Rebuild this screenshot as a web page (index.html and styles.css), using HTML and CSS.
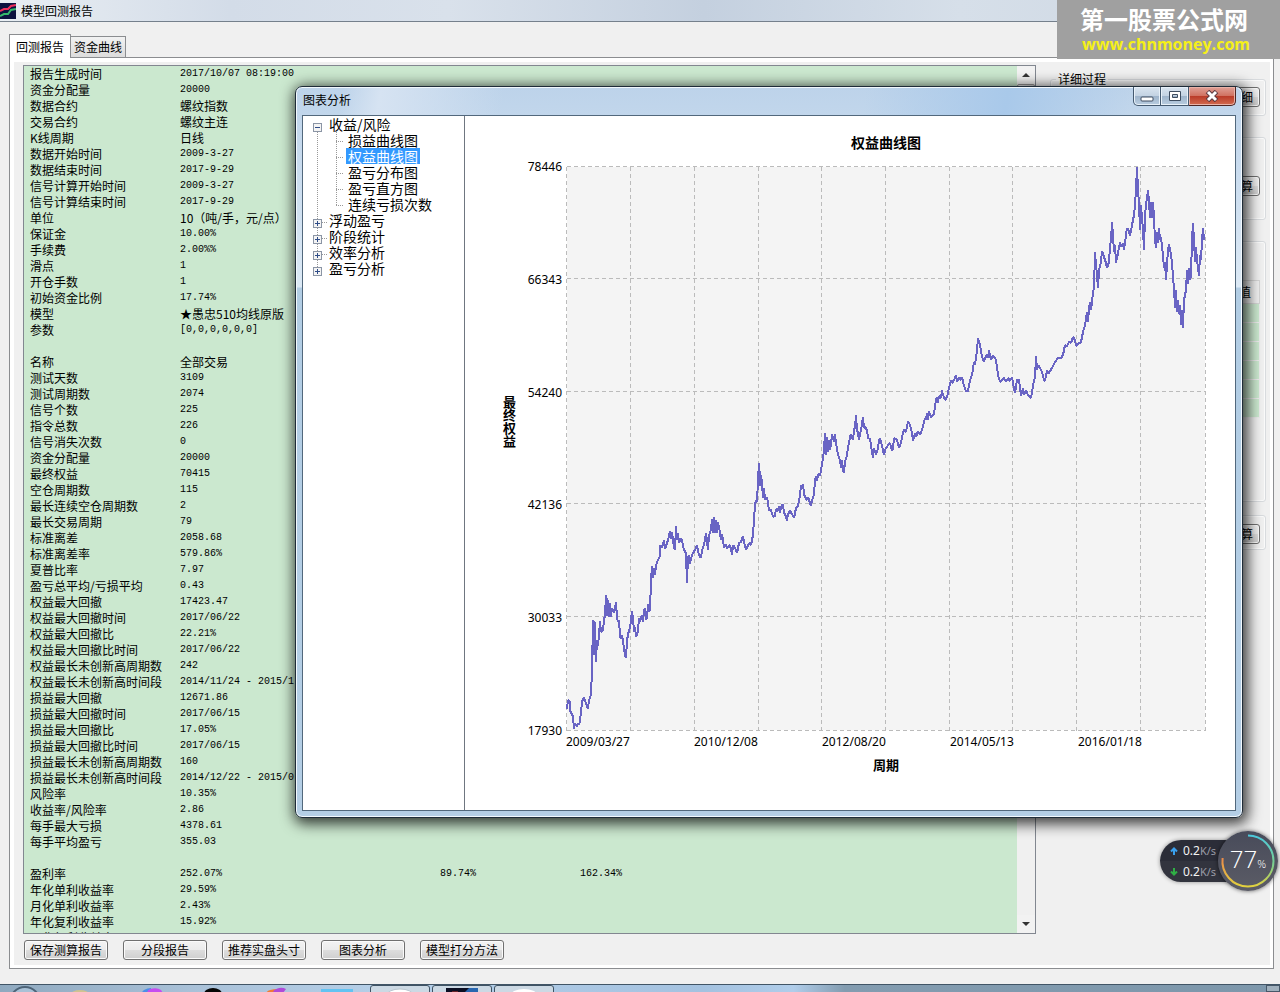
FILE: index.html
```html
<!DOCTYPE html>
<html lang="zh-CN">
<head>
<meta charset="utf-8">
<title>模型回测报告</title>
<link rel="stylesheet" href="styles.css">
</head>
<body>
<div class="desktop">
  <header class="titlebar">
    <svg class="app-icon" viewBox="0 0 16 16" aria-hidden="true"><rect width="16" height="16" fill="#0c1240"/><path d="M0 8 4 6 8 6 11 3 16 2" fill="none" stroke="#f0305c" stroke-width="2"/><path d="M0 13 4 11 8 11 11 7 16 6" fill="none" stroke="#35b96c" stroke-width="2"/></svg>
    <h1 class="window-name">模型回测报告</h1>
  </header>

  <main class="window-body">
    <nav class="tabs">
      <button class="tab tab-active" type="button">回测报告</button>
      <button class="tab" type="button">资金曲线</button>
    </nav>
    <div class="panel">
      <div class="panel-inner">
        <section class="left">
          <div class="report">
            <div class="report-text">
              <table class="rows">
                <colgroup><col class="c1"><col class="c2"><col class="c3"><col></colgroup>
                <tbody>
                <tr><th>报告生成时间</th><td>2017/10/07 08:19:00</td></tr>
                <tr><th>资金分配量</th><td>20000</td></tr>
                <tr><th>数据合约</th><td class="zh">螺纹指数</td></tr>
                <tr><th>交易合约</th><td class="zh">螺纹主连</td></tr>
                <tr><th>K线周期</th><td class="zh">日线</td></tr>
                <tr><th>数据开始时间</th><td>2009-3-27</td></tr>
                <tr><th>数据结束时间</th><td>2017-9-29</td></tr>
                <tr><th>信号计算开始时间</th><td>2009-3-27</td></tr>
                <tr><th>信号计算结束时间</th><td>2017-9-29</td></tr>
                <tr><th>单位</th><td class="zh">10（吨/手，元/点）</td></tr>
                <tr><th>保证金</th><td>10.00%</td></tr>
                <tr><th>手续费</th><td>2.00%%</td></tr>
                <tr><th>滑点</th><td>1</td></tr>
                <tr><th>开仓手数</th><td>1</td></tr>
                <tr><th>初始资金比例</th><td>17.74%</td></tr>
                <tr><th>模型</th><td class="zh">★愚忠510均线原版</td></tr>
                <tr><th>参数</th><td>[0,0,0,0,0,0]</td></tr>
                <tr><th></th><td></td></tr>
                <tr><th>名称</th><td class="zh">全部交易</td></tr>
                <tr><th>测试天数</th><td>3109</td></tr>
                <tr><th>测试周期数</th><td>2074</td></tr>
                <tr><th>信号个数</th><td>225</td></tr>
                <tr><th>指令总数</th><td>226</td></tr>
                <tr><th>信号消失次数</th><td>0</td></tr>
                <tr><th>资金分配量</th><td>20000</td></tr>
                <tr><th>最终权益</th><td>70415</td></tr>
                <tr><th>空仓周期数</th><td>115</td></tr>
                <tr><th>最长连续空仓周期数</th><td>2</td></tr>
                <tr><th>最长交易周期</th><td>79</td></tr>
                <tr><th>标准离差</th><td>2058.68</td></tr>
                <tr><th>标准离差率</th><td>579.86%</td></tr>
                <tr><th>夏普比率</th><td>7.97</td></tr>
                <tr><th>盈亏总平均/亏损平均</th><td>0.43</td></tr>
                <tr><th>权益最大回撤</th><td>17423.47</td></tr>
                <tr><th>权益最大回撤时间</th><td>2017/06/22</td></tr>
                <tr><th>权益最大回撤比</th><td>22.21%</td></tr>
                <tr><th>权益最大回撤比时间</th><td>2017/06/22</td></tr>
                <tr><th>权益最长未创新高周期数</th><td>242</td></tr>
                <tr><th>权益最长未创新高时间段</th><td>2014/11/24 - 2015/1</td></tr>
                <tr><th>损益最大回撤</th><td>12671.86</td></tr>
                <tr><th>损益最大回撤时间</th><td>2017/06/15</td></tr>
                <tr><th>损益最大回撤比</th><td>17.05%</td></tr>
                <tr><th>损益最大回撤比时间</th><td>2017/06/15</td></tr>
                <tr><th>损益最长未创新高周期数</th><td>160</td></tr>
                <tr><th>损益最长未创新高时间段</th><td>2014/12/22 - 2015/0</td></tr>
                <tr><th>风险率</th><td>10.35%</td></tr>
                <tr><th>收益率/风险率</th><td>2.86</td></tr>
                <tr><th>每手最大亏损</th><td>4378.61</td></tr>
                <tr><th>每手平均盈亏</th><td>355.03</td></tr>
                <tr><th></th><td></td></tr>
                <tr><th>盈利率</th><td>252.07%</td><td>89.74%</td><td>162.34%</td></tr>
                <tr><th>年化单利收益率</th><td>29.59%</td></tr>
                <tr><th>月化单利收益率</th><td>2.43%</td></tr>
                <tr><th>年化复利收益率</th><td>15.92%</td></tr>
                <tr><th>月化复利收益率</th><td></td></tr>
                </tbody>
              </table>
            </div>
            <div class="scrollbar">
              <button class="scroll-btn" type="button" aria-label="向上"><svg width="8" height="4" viewBox="0 0 8 4"><path d="M0 4 4 0 8 4z" fill="#333"/></svg></button>
              <div class="thumb"></div>
              <button class="scroll-btn" type="button" aria-label="向下"><svg width="8" height="4" viewBox="0 0 8 4"><path d="M0 0 4 4 8 0z" fill="#333"/></svg></button>
            </div>
          </div>
          <div class="actions">
            <button class="btn" type="button">保存测算报告</button>
            <button class="btn" type="button">分段报告</button>
            <button class="btn" type="button">推荐实盘头寸</button>
            <button class="btn" type="button">图表分析</button>
            <button class="btn" type="button">模型打分方法</button>
          </div>
        </section>
        <aside class="side">
          <fieldset class="group g-detail">
            <legend>详细过程</legend>
            <button class="btn btn-end" type="button">细</button>
          </fieldset>
          <div class="group g-calc"><button class="btn btn-end" type="button">算</button></div>
          <div class="group g-values">
            <table class="values">
              <thead><tr><th>值</th></tr></thead>
              <tbody><tr><td></td></tr><tr><td></td></tr><tr><td></td></tr><tr><td></td></tr><tr><td></td></tr><tr><td></td></tr></tbody>
            </table>
          </div>
          <div class="group g-last"><button class="btn btn-end" type="button">算</button></div>
        </aside>
      </div>
    </div>
  </main>

  <footer class="taskbar">
    <svg class="tray" width="360" height="8" viewBox="0 0 360 8" aria-hidden="true">
      <circle cx="25" cy="17" r="15" fill="#a9c1d6" stroke="#4d6478" stroke-width="2"/>
      <ellipse cx="80" cy="9" rx="9" ry="4" fill="#cfc391"/>
      <path d="M142 8a10 5 0 0 1 9-5v5z" fill="#4b8fe8"/><path d="M147 8a8 5 0 0 1 14-3l2 3z" fill="#c64df0"/>
      <ellipse cx="213" cy="9" rx="9" ry="6" fill="#050505"/>
      <path d="M266 8a12 5 0 0 1 12-4v4z" fill="#f07a35"/><path d="M273 8a8 5 0 0 1 13-4l-3 4z" fill="#b04ad8"/>
      <rect x="321" y="4" width="32" height="4" fill="#63c3f2"/>
    </svg>
    <button class="task" type="button" aria-label="浏览器"><svg width="30" height="6" viewBox="0 0 30 6"><ellipse cx="15" cy="7" rx="13" ry="6" fill="#fff" stroke="#b9c6d0"/></svg></button>
    <button class="task" type="button" aria-label="行情软件"><svg width="32" height="6" viewBox="0 0 32 6"><rect width="32" height="6" fill="#0b0e22"/><path d="M6 4h6" stroke="#c53b32"/><path d="M17 6 23 0h9v4z" fill="#2866b0"/></svg></button>
    <button class="task" type="button" aria-label="程序"><svg width="30" height="6" viewBox="0 0 30 6"><ellipse cx="15" cy="7" rx="13" ry="6" fill="#fff"/></svg></button>
    <span class="show-desktop"></span>
  </footer>

  <section class="dialog" role="dialog" aria-labelledby="dlg">
    <header class="dialog-title">
      <h2 id="dlg">图表分析</h2>
      <div class="controls">
        <button class="ctl ctl-min" type="button" aria-label="最小化"><svg width="14" height="12" viewBox="0 0 14 12"><rect x="1" y="7" width="12" height="4" rx="1" fill="#fff" stroke="#3e4d60"/></svg></button>
        <button class="ctl ctl-max" type="button" aria-label="最大化"><svg width="14" height="12" viewBox="0 0 14 12"><path fill-rule="evenodd" d="M1.500 1.500h11v9h-11zM4.500 4.500v3h5v-3z" fill="#fff" stroke="#3e4d60"/></svg></button>
        <button class="ctl ctl-close" type="button" aria-label="关闭"><svg width="14" height="12" viewBox="0 0 14 12"><path d="M2.500 1.500 11.500 10.500M11.500 1.500 2.500 10.500" stroke="#5c3a40" stroke-width="5"/><path d="M3 2 11 10M11 2 3 10" stroke="#fff" stroke-width="3"/></svg></button>
      </div>
    </header>
    <div class="client">
      <nav class="tree">
        <ul class="root">
          <li><button class="toggle toggle-open" type="button" aria-label="折叠"></button><span class="node">收益/风险</span>
            <ul class="branch">
              <li>损益曲线图</li>
              <li><span class="selected">权益曲线图</span></li>
              <li>盈亏分布图</li>
              <li>盈亏直方图</li>
              <li>连续亏损次数</li>
            </ul>
          </li>
          <li><button class="toggle" type="button" aria-label="展开"></button><span class="node">浮动盈亏</span></li>
          <li><button class="toggle" type="button" aria-label="展开"></button><span class="node">阶段统计</span></li>
          <li><button class="toggle" type="button" aria-label="展开"></button><span class="node">效率分析</span></li>
          <li><button class="toggle" type="button" aria-label="展开"></button><span class="node">盈亏分析</span></li>
        </ul>
      </nav>
      <figure class="chart">
        <figcaption class="chart-title">权益曲线图</figcaption>
        <div class="y-name">最终权益</div>
        <div class="y-ticks"><span>78446</span><span>66343</span><span>54240</span><span>42136</span><span>30033</span><span>17930</span></div>
        <svg class="plot" viewBox="566 166 640 565" preserveAspectRatio="none" role="img" aria-label="权益曲线图">
          <rect x="567" y="167" width="638" height="563" fill="#f4f4f4"/>
          <path class="grid" d="M567 166.500H1206M567 278.500H1206M567 391.500H1206M567 503.500H1206M567 616.500H1206M567 730.500H1206M566.500 167V731M630.500 167V731M694.500 167V731M758.500 167V731M821.500 167V731M885.500 167V731M949.500 167V731M1012.500 167V731M1076.500 167V731M1140.500 167V731M1205.500 167V731"/>
          <polyline class="equity" points="567,709 568,700 570,702 570,711 572,714 573,717 574,729 575,723 577,727 578,723 579,725 580,721 581,712 582,702 583,699 584,697 586,704 588,709 589,700 591,695 592,670 593,620 594,655 594,621 595,624 596,662 597,640 598,646 599,635 600,621 601,632 603,630 604,620 605,615 606,595 607,600 607,616 608,600 609,617 610,603 611,617 612,608 614,613 615,609 616,602 617,617 618,622 619,620 620,636 621,639 622,635 624,648 625,656 626,658 627,640 629,630 630,628 631,620 632,611 633,618 634,632 635,627 636,637 638,631 639,618 640,622 641,618 642,615 643,622 644,610 645,608 646,620 647,618 648,604 649,612 650,610 651,580 652,566 653,578 654,568 655,575 656,565 658,560 660,556 660,545 662,548 664,540 665,549 666,546 668,540 670,531 671,539 672,532 674,548 675,550 676,526 677,540 678,533 679,543 681,538 682,541 684,550 686,553 687,583 688,556 688,565 689,555 690,564 691,558 693,553 695,550 697,545 699,555 701,558 702,550 704,545 706,533 707,541 708,550 709,535 711,530 712,519 713,533 714,517 715,533 716,520 717,533 718,522 720,533 721,540 722,534 723,540 724,548 726,544 727,549 729,545 731,548 732,555 733,545 735,548 737,553 739,543 741,542 743,536 744,542 746,550 749,543 751,545 753,535 754,520 755,505 756,500 757,502 758,480 759,463 760,478 760,486 761,475 762,483 763,498 764,488 765,500 767,497 769,510 771,510 773,517 775,516 776,509 778,511 779,506 780,513 781,507 783,504 784,513 786,516 787,521 788,514 790,511 792,514 794,518 796,508 798,506 800,495 801,485 802,487 803,484 804,494 805,497 807,500 808,497 809,500 811,506 812,500 814,495 815,480 816,476 817,481 818,475 819,473 820,476 821,470 823,458 824,450 825,433 826,455 827,437 828,452 829,440 830,450 831,444 832,434 834,442 835,434 836,444 837,448 838,455 840,460 841,468 842,460 843,470 844,473 845,462 847,455 848,448 850,437 851,434 853,440 854,430 855,427 856,415 857,430 858,433 859,440 860,434 861,430 863,417 864,428 865,427 867,430 868,438 870,439 872,452 873,458 874,448 876,455 878,448 879,440 880,438 882,446 884,455 885,450 888,445 890,443 892,451 893,448 894,438 897,440 899,448 901,443 903,432 904,430 906,432 908,421 910,425 912,433 913,441 915,433 916,437 918,431 920,435 922,430 924,422 925,418 926,420 927,413 928,420 929,411 931,418 932,416 934,414 936,400 937,397 938,403 939,396 941,398 942,390 943,395 945,400 947,397 949,388 951,380 952,383 954,380 955,378 956,375 957,382 959,377 960,380 962,377 964,386 966,391 968,391 970,380 972,375 974,362 975,365 977,350 978,338 980,345 982,357 984,362 986,355 988,358 989,350 991,360 993,355 996,360 998,375 1000,382 1002,380 1004,378 1006,382 1008,378 1010,381 1012,377 1013,383 1015,393 1017,380 1019,380 1020,387 1021,396 1023,388 1024,395 1026,390 1028,395 1031,398 1032,392 1034,380 1035,378 1036,356 1037,370 1038,365 1040,368 1042,372 1044,380 1045,381 1047,370 1048,374 1052,368 1055,362 1058,358 1061,358 1063,355 1065,345 1067,346 1069,342 1071,343 1073,337 1075,340 1076,346 1078,344 1081,342 1083,332 1085,325 1087,312 1088,322 1089,308 1090,302 1091,310 1092,302 1093,292 1094,288 1095,252 1096,265 1097,275 1098,288 1099,270 1101,262 1102,251 1104,257 1106,263 1107,268 1109,262 1110,246 1111,240 1112,222 1113,235 1114,252 1115,245 1116,263 1118,253 1120,242 1121,247 1123,243 1124,250 1126,235 1127,228 1129,231 1130,236 1132,225 1134,215 1135,205 1136,190 1137,167 1138,190 1139,203 1140,230 1141,205 1142,218 1143,230 1144,250 1145,215 1146,205 1148,190 1149,201 1150,218 1151,202 1152,218 1153,202 1154,218 1155,240 1156,248 1157,232 1158,243 1159,228 1160,240 1161,237 1163,255 1164,268 1165,262 1166,280 1167,265 1168,250 1169,244 1171,255 1172,262 1173,278 1174,288 1175,308 1176,290 1177,312 1178,300 1179,314 1180,305 1181,325 1182,310 1183,328 1184,300 1186,290 1187,270 1188,284 1189,268 1190,280 1191,275 1192,240 1193,223 1194,240 1195,262 1196,247 1197,260 1199,276 1200,255 1201,260 1202,240 1203,228 1204,240"/>
        </svg>
        <div class="x-ticks"><span>2009/03/27</span><span>2010/12/08</span><span>2012/08/20</span><span>2014/05/13</span><span>2016/01/18</span></div>
        <div class="x-name">周期</div>
      </figure>
    </div>
  </section>

  <div class="brand">
    <strong>第一股票公式网</strong>
    <a href="#">www.chnmoney.com</a>
  </div>

  <div class="monitor">
    <div class="speeds">
      <span class="speed"><svg width="8" height="8" viewBox="0 0 8 8"><path d="M4 8V2M1 4.500 4 1.500 7 4.500" fill="none" stroke="#3aa0ee" stroke-width="2"/></svg><span><b>0.2</b><i>K/s</i></span></span>
      <span class="speed"><svg width="8" height="8" viewBox="0 0 8 8"><path d="M4 0V6M1 3.500 4 6.500 7 3.500" fill="none" stroke="#2fae45" stroke-width="2"/></svg><span><b>0.2</b><i>K/s</i></span></span>
    </div>
    <div class="gauge">
      <svg class="ring" viewBox="0 0 60 60" aria-hidden="true">
        <defs><linearGradient id="arc" x1="0" y1="0" x2="0" y2="1"><stop offset="0" stop-color="#4cc9dc"/><stop offset=".6" stop-color="#7fd08a"/><stop offset="1" stop-color="#e2d13e"/></linearGradient>
        <linearGradient id="arc2" x1="0" y1="0" x2="0" y2="1"><stop offset="0" stop-color="#ea8a4a"/><stop offset="1" stop-color="#e2d13e"/></linearGradient></defs>
        <path d="M30 4.500A25.500 25.500 0 0 1 30 55.500" fill="none" stroke="url(#arc)" stroke-width="2"/>
        <path d="M30 55.500A25.500 25.500 0 0 1 4.600 27" fill="none" stroke="url(#arc2)" stroke-width="2"/>
      </svg>
      <span class="percent">77<small>%</small></span>
    </div>
  </div>
</div>
</body>
</html>
```
FILE: styles.css
```css
* { box-sizing: border-box; }

body {
  margin: 0;
  background: #f0f0f0;
  color: #000;
  font: 12px/16px "Noto Sans CJK SC", sans-serif;
}

h1, h2, ul, figure, fieldset { margin: 0; padding: 0; border: 0; font-weight: normal; }
ul { list-style: none; }
button { margin: 0; padding: 0; color: inherit; font: inherit; }

.desktop {
  position: relative;
  display: flex;
  flex-direction: column;
  height: 100vh;
  min-height: 600px;
  overflow: hidden;
}

/* Main window */
.titlebar {
  display: flex;
  align-items: center;
  gap: 5px;
  flex: none;
  height: 22px;
  border-bottom: 1px solid #75808c;
  background: linear-gradient(90deg, #e9eef3, #d3dce8 18%, #d9e1eb 35%, #c4d0df 55%, #d6dfe9 75%, #ccd6e2);
}
.app-icon { width: 16px; height: 16px; }
.window-name { font-size: 12px; }

.window-body {
  display: flex;
  flex-direction: column;
  flex: 1;
  min-height: 0;
  padding: 12px 6px 15px 9px;
}

.tabs { display: flex; align-items: flex-end; flex: none; }
.tab {
  height: 21px;
  padding: 0 3px;
  border: 1px solid #8b8d90;
  border-left: 0;
  border-bottom: 0;
  background: linear-gradient(#f2f2f2, #dcdcdc);
}
.tab-active {
  z-index: 1;
  height: 24px;
  margin-bottom: -1px;
  padding: 0 6px;
  border-left: 1px solid #8b8d90;
  background: #fff;
}

.panel {
  flex: 1;
  min-height: 0;
  padding: 4px 3px 3px 4px;
  border: 1px solid #8b8d90;
  background: #fff;
}
.panel-inner {
  display: flex;
  gap: 14px;
  height: 100%;
  padding: 3px 4px 5px 9px;
  background: #f0f0f0;
}
.left { display: flex; flex: 1; flex-direction: column; min-width: 0; }

.report {
  display: flex;
  flex: 1;
  min-height: 0;
  border: 1px solid #828790;
  background: #cbe8cf;
}
.report-text { flex: 1; min-width: 0; overflow: hidden; padding-left: 6px; }
.rows { width: 100%; table-layout: fixed; border-collapse: collapse; }
.rows tr { height: 16px; }
.rows th, .rows td {
  height: 16px;
  padding: 0;
  font-weight: normal;
  text-align: left;
  white-space: nowrap;
}
.rows td { font: 10px/16px "Liberation Mono", monospace; }
.rows .zh { font: 12px/16px "Noto Sans CJK SC", sans-serif; }
.c1 { width: 150px; }
.c2 { width: 260px; }
.c3 { width: 140px; }

.scrollbar { display: flex; flex-direction: column; width: 18px; background: #f0f0f0; }
.scroll-btn {
  display: grid;
  place-items: center;
  height: 18px;
  border: 0;
  background: #f2f2f2;
}
.thumb {
  flex: 1;
  margin-bottom: 300px;
  border: 1px solid #979797;
  border-radius: 2px;
  background: linear-gradient(90deg, #f4f4f4, #d4d4d4);
}

.actions { display: flex; gap: 15px; padding: 6px 0 0 1px; }
.btn {
  width: 84px;
  height: 20px;
  border: 1px solid #707070;
  border-radius: 3px;
  background: linear-gradient(#f3f3f3, #ebebeb 50%, #dddddd 50%, #cfcfcf);
  box-shadow: inset 0 0 0 1px #fbfbfb;
  line-height: 18px;
  white-space: nowrap;
}

.side { flex: none; width: 216px; padding-top: 6px; }
.group {
  display: flex;
  justify-content: flex-end;
  align-items: flex-start;
  border: 1px solid #d8dbde;
  border-radius: 3px;
  box-shadow: inset 0 0 0 1px #fafafa;
  padding: 0 5px;
}
.g-detail { display: block; height: 45px; margin-bottom: 21px; }
.g-detail legend { padding: 0 2px; line-height: 16px; }
.g-detail .btn { display: block; margin-left: auto; }
.g-calc { height: 83px; margin-bottom: 21px; padding-top: 38px; }
.g-values { height: 261px; margin-bottom: 13px; padding-top: 38px; }
.g-last { height: 35px; padding-top: 8px; }
.btn-end { padding-right: 6px; text-align: right; }
.values { width: 100%; border-collapse: collapse; }
.values th {
  height: 23px;
  padding: 0 8px 0 0;
  border: 1px solid #d6d6d6;
  font-weight: normal;
  text-align: right;
}
.values td { height: 19px; padding: 0; border: 1px solid #ececec; background: #cbe8cf; }

/* Taskbar */
.taskbar {
  display: flex;
  flex: none;
  gap: 2px;
  height: 8px;
  overflow: hidden;
  border-top: 1px solid #415566;
  background: linear-gradient(90deg, #8fa9bf, #a9c1d8 15%, #b5cfe8 30%, #a4c2e0 55%, #b0cdea 62%, #839cb0 66%, #7d97ab);
}
.tray { flex: none; margin-right: 8px; }
.task {
  display: flex;
  justify-content: center;
  align-items: flex-start;
  width: 60px;
  height: 40px;
  padding-top: 2px;
  border: 1px solid #3f5364;
  border-radius: 3px;
  background: #ccd9e4;
}
.show-desktop { width: 14px; margin-left: auto; border: 1px solid #47596a; background: #a0b0bd; }

/* Chart dialog, floating over the main window */
.dialog {
  position: absolute;
  z-index: 2;
  inset: 86px 37px 174px 295px;
  display: flex;
  flex-direction: column;
  padding: 0 6px 6px;
  border: 1px solid #1f2c38;
  border-radius: 7px;
  background:
    linear-gradient(100deg, transparent 5%, #d6e3f2 9%, transparent 22%, transparent 60%, #a9c9ea 75%, transparent 88%) top / 100% 29px no-repeat,
    linear-gradient(#bdd3ea, #dce9f5 200px, #b2cde4 201px, #b4cee5);
  box-shadow: inset 0 0 0 1px #f2f8fd, 2px 3px 14px 3px rgba(0, 0, 0, .75);
}
.dialog-title { display: flex; flex: none; justify-content: space-between; height: 28px; }
.dialog-title h2 { padding: 5px 1px; font-size: 12px; }
.controls { display: flex; height: 19px; }
.ctl {
  display: grid;
  place-items: center;
  width: 28px;
  border: 1px solid #455a70;
  border-top: 0;
  background: linear-gradient(#d9e5f0, #c3d2e2 50%, #9eb4cb 50%, #b9cde0);
  box-shadow: inset 0 0 0 1px #e8f1f9;
}
.ctl-min { border-radius: 0 0 0 5px; }
.ctl-max { border-left: 0; }
.ctl-close {
  width: 47px;
  border-color: #4e2522;
  border-left: 0;
  border-radius: 0 0 5px 0;
  background: linear-gradient(#e0a197, #d0705f 50%, #b93a27 50%, #d26b50);
  box-shadow: inset 0 0 0 1px #eab3a8;
}
.client { display: flex; flex: 1; min-height: 0; border: 1px solid #52687c; background: #fff; }

.tree {
  flex: none;
  width: 162px;
  padding-left: 10px;
  border-right: 1px solid #6f7680;
  font-size: 14px;
}
.root { background: linear-gradient(#999 50%, transparent 50%) 4px 0 / 1px 2px repeat-y; }
.root > li {
  background: repeating-linear-gradient(90deg, #999 0 1px, transparent 1px 2px) 9px 10px / 5px 1px no-repeat;
  line-height: 16px;
  white-space: nowrap;
}
.root > li:first-child { background: linear-gradient(#fff, #fff) 0 0 / 8px 10px no-repeat; }
.root > li:last-child { background: linear-gradient(#fff, #fff) 0 10px / 8px 10px no-repeat; }
.toggle {
  display: inline-block;
  width: 9px;
  height: 9px;
  margin-right: 7px;
  border: 1px solid #8b95a5;
  vertical-align: -1px;
  background:
    linear-gradient(#2f4c88, #2f4c88) center / 5px 1px no-repeat,
    linear-gradient(#2f4c88, #2f4c88) center / 1px 5px no-repeat,
    #f4f4f4;
}
.toggle-open { background: linear-gradient(#2f4c88, #2f4c88) center / 5px 1px no-repeat, #f4f4f4; }
.branch {
  margin-left: 23px;
  background: linear-gradient(#999 50%, transparent 50%) 0 0 / 1px 74px no-repeat;
  background: repeating-linear-gradient(#999 0 1px, transparent 1px 2px) 0 0 / 1px 74px no-repeat;
}
.branch li {
  height: 16px;
  padding-left: 12px;
  background: repeating-linear-gradient(90deg, #999 0 1px, transparent 1px 2px) 0 9px / 8px 1px no-repeat;
}
.selected { display: inline-block; height: 16px; margin-left: -2px; padding: 0 2px; background: #3399ff; color: #fff; }

.chart {
  display: grid;
  flex: 1;
  grid-template-columns: 51px 50px 1fr;
  grid-template-rows: 50px 1fr 25px 54px;
  min-width: 0;
  padding-right: 29px;
}
.chart-title { grid-column: 3; padding-top: 18px; font-size: 14px; font-weight: bold; text-align: center; }
.y-name {
  grid-column: 1;
  grid-row: 2;
  align-self: center;
  justify-self: end;
  width: 13px;
  margin-bottom: 56px;
  font-size: 13px;
  font-weight: bold;
  line-height: 13px;
}
.y-ticks {
  display: flex;
  grid-column: 2;
  grid-row: 2;
  flex-direction: column;
  justify-content: space-between;
  margin: -7px 0 -8px;
  padding-right: 4px;
  font-family: "Noto Sans", sans-serif;
  text-align: right;
}
.plot { grid-column: 3; grid-row: 2; width: 100%; height: 100%; min-height: 0; }
.grid { fill: none; stroke: #bbb; stroke-dasharray: 4 3; }
.equity { fill: none; stroke: #6964c4; stroke-width: 2; stroke-linejoin: bevel; shape-rendering: crispEdges; }
.x-ticks {
  display: grid;
  grid-column: 3;
  grid-template-columns: repeat(5, 1fr);
  padding-top: 3px;
  font-family: "Noto Sans", sans-serif;
}
.x-name { grid-column: 3; font-size: 13px; font-weight: bold; text-align: center; line-height: 18px; }

/* Site badge in the corner */
.brand {
  position: absolute;
  z-index: 3;
  top: 0;
  right: 0;
  width: 223px;
  height: 59px;
  padding: 3px 0 0 23px;
  background: #a0a0a0;
}
.brand strong { display: block; color: #fff; font-size: 24px; line-height: 32px; }
.brand a {
  display: block;
  padding-left: 2px;
  color: #f5f018;
  font: bold 16px/18px "Open Sans", sans-serif;
  text-decoration: none;
}

/* Network and memory monitor */
.monitor { position: absolute; z-index: 3; right: 2px; bottom: 101px; display: flex; align-items: center; }
.speeds {
  display: grid;
  width: 86px;
  height: 42px;
  margin-right: -28px;
  padding-left: 10px;
  border-radius: 21px;
  background: linear-gradient(#2b2d38 50%, #32343e 50%);
  box-shadow: 0 0 4px rgba(0, 0, 0, .4);
}
.speed { display: flex; align-items: center; gap: 5px; color: #f2f2f2; font-family: "Noto Sans", sans-serif; }
.speed b { font-weight: normal; }
.speed i { color: #9a9ca6; font-style: normal; font-size: 11px; }
.gauge {
  position: relative;
  display: grid;
  place-items: center;
  width: 60px;
  height: 60px;
  border-radius: 50%;
  background: linear-gradient(#484b5a, #5b5c66);
  box-shadow: 0 0 4px rgba(0, 0, 0, .6);
}
.ring { position: absolute; inset: 0; }
.percent { color: #fff; font: 300 24px/28px "Open Sans", sans-serif; }
.percent small { font-size: 11px; }
```
